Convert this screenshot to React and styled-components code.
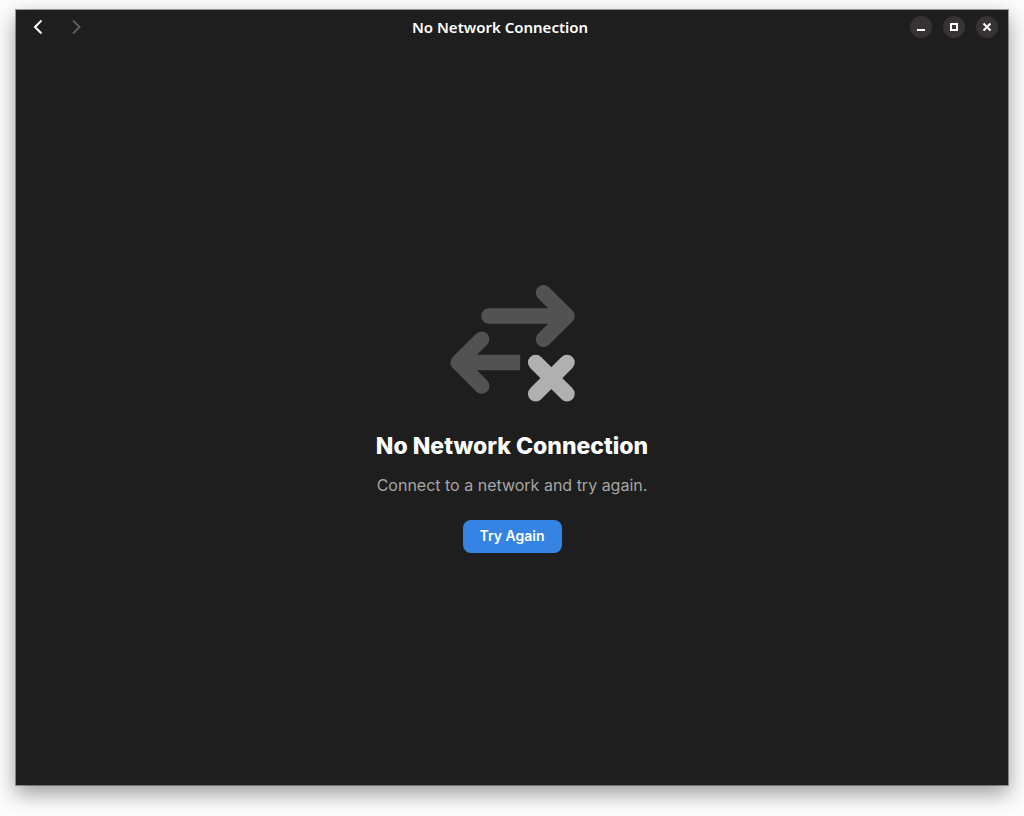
import React from 'react';
import styled, { createGlobalStyle } from 'styled-components';

const GlobalStyle = createGlobalStyle`
  *, *::before, *::after { box-sizing: border-box; }
  body {
    margin: 0;
    background: #fdfdfd;
    font-family: Inter, "Liberation Sans", sans-serif;
  }
`;

const Desktop = styled.div`
  display: flex;
  min-height: 100vh;
  padding: 10px 16px 31px;
`;

const Window = styled.div`
  flex: 1;
  display: flex;
  flex-direction: column;
  background: #1e1e1e;
  color: #fff;
  box-shadow: 0 0 0 1px rgba(0, 0, 0, 0.35), 0 8px 20px 1px rgba(0, 0, 0, 0.38);
`;

const HeaderBar = styled.header`
  display: flex;
  align-items: center;
  height: 34px;
`;

const History = styled.nav`
  display: flex;
  padding-left: 3px;
`;

const NavButton = styled.button`
  display: grid;
  place-items: center;
  width: 38px;
  height: 34px;
  padding: 0;
  border: 0;
  background: none;
  color: ${({ disabled }) => (disabled ? '#5c5c60' : '#ffffff')};
`;

const Title = styled.h1`
  flex: 1;
  margin: 0;
  font: 600 15px/22px "Noto Sans", sans-serif;
  text-align: center;
`;

const WindowControls = styled.div`
  display: flex;
  gap: 11px;
  padding: 0 10px 0 5px;
`;

const ControlButton = styled.button`
  display: grid;
  place-items: center;
  width: 22px;
  height: 22px;
  padding: 0;
  border: 0;
  border-radius: 50%;
  background: #373333;
  color: #fff;
`;

const StatusPage = styled.main`
  flex: 1;
  display: flex;
  flex-direction: column;
  align-items: center;
  justify-content: center;
  padding-top: 8px;
`;

const Heading = styled.h2`
  margin: 28px 0 0;
  font-size: 23px;
  font-weight: 800;
  line-height: 32px;
`;

const Description = styled.p`
  margin: 12px 0 0;
  color: #a5a5a5;
  font-size: 16px;
  line-height: 22px;
`;

const SuggestedButton = styled.button`
  height: 33px;
  margin-top: 24px;
  padding: 0 17px;
  border: 0;
  border-radius: 8px;
  background: #3584e4;
  color: #fff;
  font: 600 14px/20px Inter, sans-serif;
`;

const Icon = ({ size = 22, children }) => (
  <svg width={size} height={size} viewBox={`0 0 ${size} ${size}`} fill="none" stroke="currentColor" strokeWidth="2" aria-hidden="true">
    {children}
  </svg>
);

const NetworkErrorIcon = () => (
  <svg width="125" height="117" viewBox="450 285 125 117" fill="none" strokeWidth="15.5" strokeLinejoin="round" aria-hidden="true">
    <g stroke="#525252">
      <path strokeLinecap="round" d="M489 316H567M543.5 292.7L567 316L543.5 339.3" />
      <path strokeLinecap="round" d="M481.7 339.2L458.2 362.5L481.7 386" />
      <path d="M458.2 362.5H520.2" />
    </g>
    <path stroke="#b0b0b0" strokeLinecap="round" d="M535.7 362.5L567 393.8M567 362.5L535.7 393.8" />
  </svg>
);

export default function App() {
  return (
    <>
      <GlobalStyle />
      <Desktop>
        <Window>
          <HeaderBar>
            <History aria-label="History">
              <NavButton aria-label="Back">
                <Icon><path d="M14.5 4.5L8 11L14.5 17.5" /></Icon>
              </NavButton>
              <NavButton aria-label="Forward" disabled>
                <Icon><path d="M8 4.5L14.5 11L8 17.5" /></Icon>
              </NavButton>
            </History>
            <Title>No Network Connection</Title>
            <WindowControls>
              <ControlButton aria-label="Minimize">
                <Icon><path d="M7 14H15" /></Icon>
              </ControlButton>
              <ControlButton aria-label="Maximize">
                <Icon><path d="M8 8H14V14H8Z" /></Icon>
              </ControlButton>
              <ControlButton aria-label="Close">
                <Icon><path d="M7.5 7.5L14.5 14.5M14.5 7.5L7.5 14.5" /></Icon>
              </ControlButton>
            </WindowControls>
          </HeaderBar>
          <StatusPage>
            <NetworkErrorIcon />
            <Heading>No Network Connection</Heading>
            <Description>Connect to a network and try again.</Description>
            <SuggestedButton>Try Again</SuggestedButton>
          </StatusPage>
        </Window>
      </Desktop>
    </>
  );
}
